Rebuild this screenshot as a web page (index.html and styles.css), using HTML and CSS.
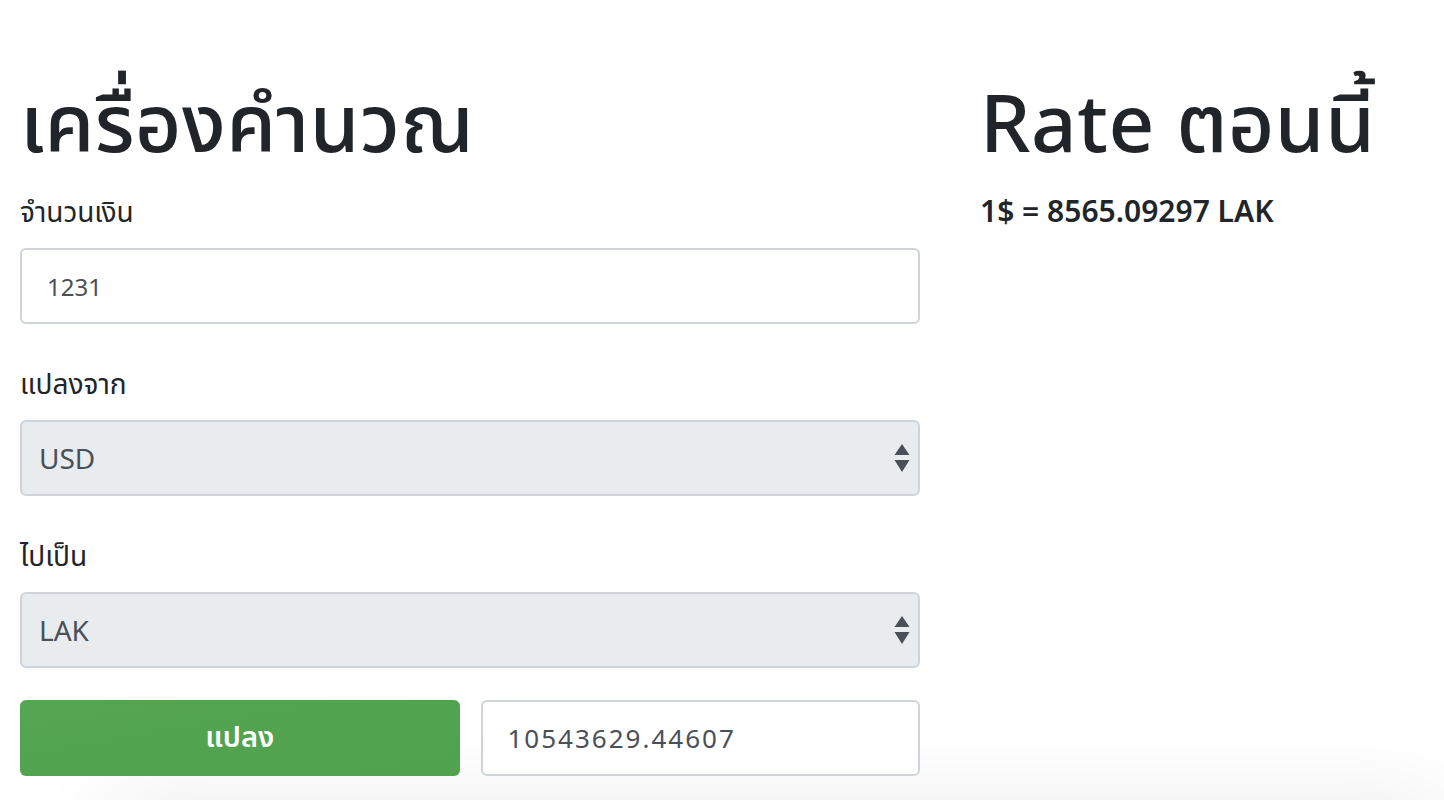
FILE: index.html
```html
<!DOCTYPE html>
<html lang="th">
<head>
<meta charset="utf-8">
<title>เครื่องคำนวณ</title>
<link rel="stylesheet" href="styles.css">
</head>
<body>
<div class="page">
  <main class="calc">
    <h1 class="title">เครื่องคำนวณ</h1>
    <div class="group">
      <label class="label" for="amount">จำนวนเงิน</label>
      <input class="field" id="amount" type="text" value="1231">
    </div>
    <div class="group">
      <label class="label" for="from">แปลงจาก</label>
      <div class="select-wrap">
        <select class="field select" id="from"><option>USD</option></select>
        <svg class="arrows" width="16" height="30" viewBox="0 0 16 30"><path d="M8 0 L15.5 11 L0.5 11 Z M0.5 16 L15.5 16 L8 28 Z" fill="#495057"/></svg>
      </div>
    </div>
    <div class="group last">
      <label class="label" for="to">ไปเป็น</label>
      <div class="select-wrap">
        <select class="field select" id="to"><option>LAK</option></select>
        <svg class="arrows" width="16" height="30" viewBox="0 0 16 30"><path d="M8 0 L15.5 11 L0.5 11 Z M0.5 16 L15.5 16 L8 28 Z" fill="#495057"/></svg>
      </div>
    </div>
    <div class="actions">
      <button class="btn" type="button">แปลง</button>
      <input class="field result" type="text" value="10543629.44607" readonly>
    </div>
  </main>
  <aside class="rate">
    <h1 class="title">Rate ตอนนี้</h1>
    <p class="rate-value">1$ = 8565.09297 LAK</p>
  </aside>
</div>
<div class="footer-card"></div>
</body>
</html>
```
FILE: styles.css
```css
html, body {
  margin: 0;
  padding: 0;
  background: #fff;
  overflow: hidden;
}
body {
  font-family: "Noto Sans", "Noto Sans Thai", "Noto Sans CJK SC", sans-serif;
  color: #212529;
  height: 800px;
}
.page {
  display: grid;
  grid-template-columns: 900px 1fr;
  column-gap: 60px;
  padding: 0 20px;
}
.title {
  font-size: 80px;
  font-weight: 500;
  line-height: 96px;
  margin: 73px 0 24px;
  letter-spacing: 0.5px;
}
.label {
  display: block;
  font-size: 28px;
  line-height: 36px;
  height: 36px;
  margin-bottom: 19px;
}
.group {
  margin-bottom: 41px;
}
.group.last {
  margin-bottom: 32px;
}
.field {
  display: block;
  box-sizing: border-box;
  width: 100%;
  height: 76px;
  border: 2px solid #ced4da;
  border-radius: 6px;
  background: #fff;
  color: #495057;
  font-family: inherit;
  font-size: 24px;
  padding: 0 25px;
  margin: 0;
  outline: none;
}
.select-wrap {
  position: relative;
}
.select {
  -webkit-appearance: none;
  appearance: none;
  background: #e9ecef;
  font-size: 28px;
  padding: 0 17px;
}
.arrows {
  position: absolute;
  right: 10px;
  top: 24px;
  pointer-events: none;
}
.actions {
  display: grid;
  grid-template-columns: 1fr 1fr;
  column-gap: 21px;
}
.btn {
  height: 76px;
  border: none;
  border-radius: 6px;
  background: linear-gradient(170deg, #55a553 0%, #50a24e 100%);
  color: #fff;
  font-family: inherit;
  font-size: 29px;
  font-weight: 600;
  cursor: pointer;
}
.result {
  font-size: 26px;
  letter-spacing: 2px;
}
.rate-value {
  font-size: 30px;
  font-weight: 600;
  margin: 0;
  line-height: 36px;
}
.footer-card {
  margin: 40px 0 0 110px;
  height: 40px;
  background: #fff;
  box-shadow: 0 0 90px rgba(0, 0, 0, 0.14);
}
```
